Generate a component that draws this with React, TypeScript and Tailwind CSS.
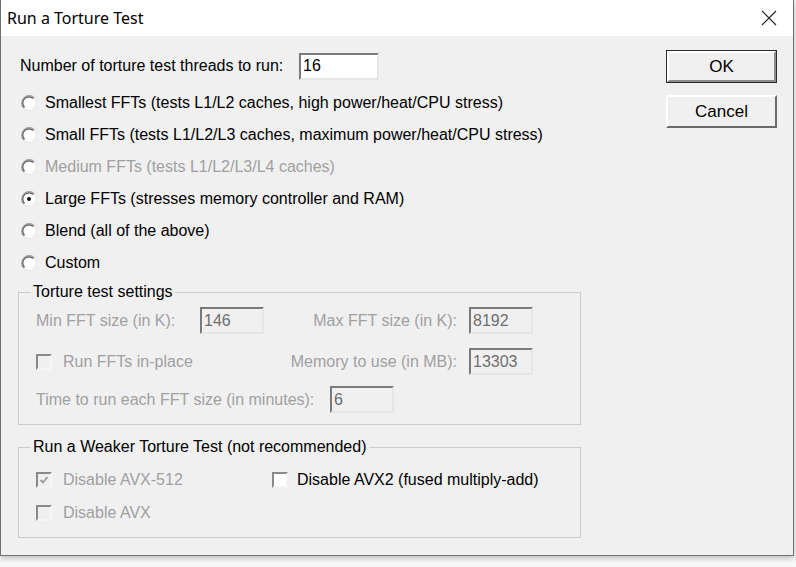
import React from "react";

const font = { fontFamily: '"Liberation Sans", Arial, sans-serif' };

function Radio({ checked = false }: { checked?: boolean }) {
	return (
		<svg width="16" height="16" viewBox="0 0 16 16" className="shrink-0">
			<circle cx="8" cy="8" r="7.5" fill="#ffffff" />
			<path d="M2.7 13.3 A7.5 7.5 0 0 1 13.3 2.7" stroke="#a0a0a0" strokeWidth="1.2" fill="none" />
			<path d="M3.6 12.4 A6.2 6.2 0 0 1 12.4 3.6" stroke="#5a5a5a" strokeWidth="1.2" fill="none" />
			<path d="M13.3 2.7 A7.5 7.5 0 0 1 2.7 13.3" stroke="#e6e6e6" strokeWidth="1" fill="none" />
			{checked && <circle cx="8" cy="8" r="2" fill="#111111" />}
		</svg>
	);
}

function Check({ checked = false, disabled = false }: { checked?: boolean; disabled?: boolean }) {
	return (
		<div
			className={`w-[16px] h-[16px] shrink-0 border-2 border-t-[#8a8a8a] border-l-[#8a8a8a] border-r-[#f5f5f5] border-b-[#f5f5f5] flex items-center justify-center ${
				disabled ? "bg-[#f0f0f0]" : "bg-white"
			}`}
		>
			{checked && (
				<svg width="10" height="10" viewBox="0 0 10 10">
					<path d="M1.5 5 L4 7.5 L8.5 2" stroke="#9a9a9a" strokeWidth="1.8" fill="none" />
				</svg>
			)}
		</div>
	);
}

function Field({ value, w, white = false }: { value: string; w: string; white?: boolean }) {
	return (
		<div
			className={`${w} h-[27px] shrink-0 border-2 border-t-[#7a7a7a] border-l-[#7a7a7a] border-r-[#e6e6e6] border-b-[#e6e6e6] flex items-center pl-[2px] text-[16px] ${
				white ? "bg-white text-black" : "bg-[#f0f0f0] text-[#6e6e6e]"
			}`}
		>
			{value}
		</div>
	);
}

const radios = [
	{ label: "Smallest FFTs (tests L1/L2 caches, high power/heat/CPU stress)" },
	{ label: "Small FFTs (tests L1/L2/L3 caches, maximum power/heat/CPU stress)" },
	{ label: "Medium FFTs (tests L1/L2/L3/L4 caches)", disabled: true },
	{ label: "Large FFTs (stresses memory controller and RAM)", checked: true },
	{ label: "Blend (all of the above)" },
	{ label: "Custom" },
];

export default function App() {
	return (
		<div className="w-[796px] h-[567px] bg-[#f8f8f8] overflow-hidden" style={font}>
			<div className="w-[794px] h-[556px] border-l border-r border-b border-[#707070] bg-[#f0f0f0] flex flex-col shadow-[0_2px_6px_rgba(0,0,0,0.25)]">
				{/* Title bar */}
				<div className="h-[36px] bg-white flex items-center justify-between pl-[6px] pr-[16px] shrink-0">
					<div className="text-[16px] text-black" style={{ fontFamily: '"Noto Sans", "Liberation Sans", sans-serif' }}>
						Run a Torture Test
					</div>
					<svg width="16" height="16" viewBox="0 0 16 16">
						<path d="M1 1 L15 15 M15 1 L1 15" stroke="#222" strokeWidth="1.1" />
					</svg>
				</div>

				<div className="flex flex-row flex-1 text-[16px] text-black">
					{/* Left column */}
					<div className="w-[665px] pl-[17px] pt-[17px] flex flex-col">
						<div className="flex items-center h-[26px] pl-[2px]">
							<div className="w-[279px]">Number of torture test threads to run:</div>
							<Field value="16" w="w-[80px]" white />
						</div>

						<div className="mt-[8px] flex flex-col">
							{radios.map((r) => (
								<div key={r.label} className="h-[32px] flex items-center pl-[3px] gap-[8px]">
									<Radio checked={r.checked} />
									<span className={r.disabled ? "text-[#a0a0a0]" : ""}>{r.label}</span>
								</div>
							))}
						</div>

						<fieldset className="mt-[4px] w-[563px] border border-[#cdcdcd] pl-[17px] pb-[11px]">
							<legend className="-ml-[5px] px-[2px] leading-[18px]">Torture test settings</legend>
							<div className="flex flex-col text-[#a0a0a0]">
								<div className="flex items-center mt-[6px]">
									<div className="w-[164px]">Min FFT size (in K):</div>
									<Field value="146" w="w-[64px]" />
									<div className="w-[193px] text-right">Max FFT size (in K):</div>
									<div className="ml-[12px]">
										<Field value="8192" w="w-[64px]" />
									</div>
								</div>
								<div className="flex items-center mt-[14px]">
									<div className="w-[228px] flex items-center gap-[11px]">
										<Check disabled />
										<span>Run FFTs in-place</span>
									</div>
									<div className="w-[193px] text-right">Memory to use (in MB):</div>
									<div className="ml-[12px]">
										<Field value="13303" w="w-[64px]" />
									</div>
								</div>
								<div className="flex items-center mt-[11px]">
									<div className="w-[294px]">Time to run each FFT size (in minutes):</div>
									<Field value="6" w="w-[64px]" />
								</div>
							</div>
						</fieldset>

						<fieldset className="mt-[13px] w-[563px] border border-[#cdcdcd] pl-[17px] pb-[11px]">
							<legend className="-ml-[5px] px-[2px] leading-[18px]">Run a Weaker Torture Test (not recommended)</legend>
							<div className="flex flex-col mt-[11px]">
								<div className="flex items-center h-[26px]">
									<div className="w-[236px] flex items-center gap-[11px] text-[#a0a0a0]">
										<Check checked disabled />
										<span>Disable AVX-512</span>
									</div>
									<div className="flex items-center gap-[9px]">
										<Check />
										<span>Disable AVX2 (fused multiply-add)</span>
									</div>
								</div>
								<div className="flex items-center h-[26px] mt-[7px] gap-[11px] text-[#a0a0a0]">
									<Check disabled />
									<span>Disable AVX</span>
								</div>
							</div>
						</fieldset>
					</div>

					{/* Buttons */}
					<div className="pt-[14px] flex flex-col gap-[12px]">
						<button className="w-[111px] h-[33px] border border-[#2b2b2b] bg-[#f0f0f0] text-[17px]">
							<div className="h-full w-full border-2 border-t-white border-l-white border-r-[#8c8c8c] border-b-[#8c8c8c] flex items-center justify-center">
								OK
							</div>
						</button>
						<button className="w-[111px] h-[33px] border-2 border-t-white border-l-white border-r-[#6a6a6a] border-b-[#6a6a6a] bg-[#f0f0f0] text-[17px] flex items-center justify-center">
							Cancel
						</button>
					</div>
				</div>
			</div>
		</div>
	);
}
